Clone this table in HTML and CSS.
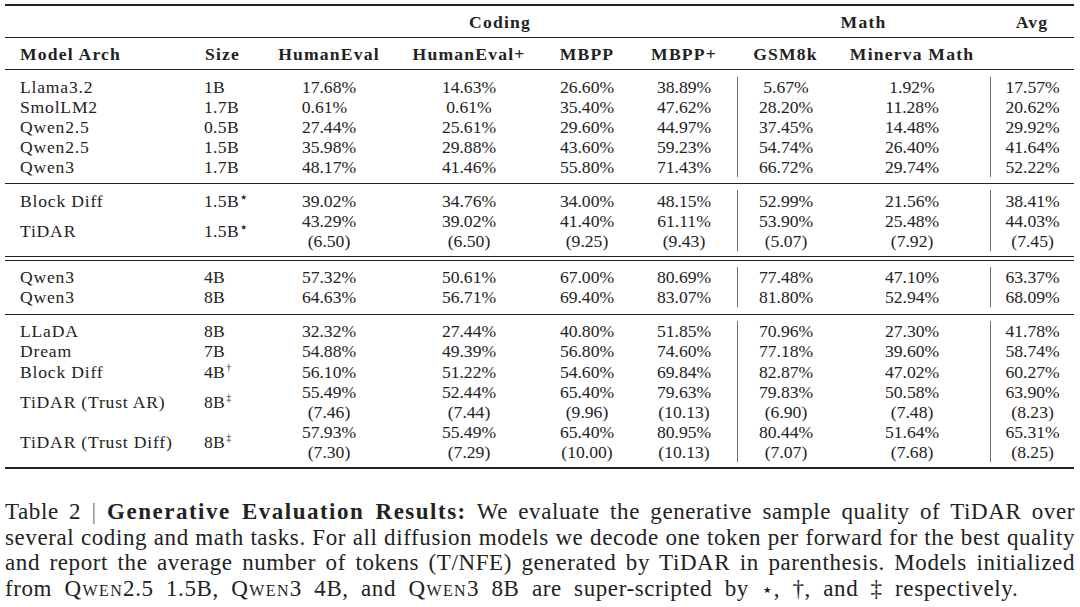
FILE: index.html
```html
<!DOCTYPE html>
<html lang="en">
<head>
<meta charset="utf-8">
<title>Table 2 | Generative Evaluation Results</title>
<link rel="stylesheet" href="styles.css">
</head>
<body>
<div class="page">
  <table class="results">
    <colgroup>
      <col class="c-model"><col class="c-size"><col class="c-he"><col class="c-hep"><col class="c-mbpp"><col class="c-mbppp"><col class="c-gsm"><col class="c-minerva"><col class="c-avg">
    </colgroup>
    <thead>
      <tr class="h1">
        <th></th><th></th>
        <th colspan="4">Coding</th>
        <th colspan="2">Math</th>
        <th>Avg</th>
      </tr>
      <tr class="h2">
        <th class="left">Model Arch</th>
        <th class="left">Size</th>
        <th>HumanEval</th>
        <th>HumanEval+</th>
        <th>MBPP</th>
        <th>MBPP+</th>
        <th>GSM8k</th>
        <th>Minerva Math</th>
        <th></th>
      </tr>
    </thead>
    <tbody>
      <tr class="gap g7"><td colspan="9"></td></tr>
      <tr><td class="name">Llama3.2</td><td class="size">1B</td><td>17.68%</td><td>14.63%</td><td>26.60%</td><td>38.89%</td><td class="vl">5.67%</td><td>1.92%</td><td class="vl">17.57%</td></tr>
      <tr><td class="name">SmolLM2</td><td class="size">1.7B</td><td><span class="nudge">0.61%</span></td><td>0.61%</td><td>35.40%</td><td>47.62%</td><td class="vl">28.20%</td><td>11.28%</td><td class="vl">20.62%</td></tr>
      <tr><td class="name">Qwen2.5</td><td class="size">0.5B</td><td>27.44%</td><td>25.61%</td><td>29.60%</td><td>44.97%</td><td class="vl">37.45%</td><td>14.48%</td><td class="vl">29.92%</td></tr>
      <tr><td class="name">Qwen2.5</td><td class="size">1.5B</td><td>35.98%</td><td>29.88%</td><td>43.60%</td><td>59.23%</td><td class="vl">54.74%</td><td>26.40%</td><td class="vl">41.64%</td></tr>
      <tr><td class="name">Qwen3</td><td class="size">1.7B</td><td>48.17%</td><td>41.46%</td><td>55.80%</td><td>71.43%</td><td class="vl">66.72%</td><td>29.74%</td><td class="vl">52.22%</td></tr>
      <tr class="gap g6"><td colspan="9"></td></tr>
      <tr class="rule"><td colspan="9"></td></tr>
      <tr class="gap g6"><td colspan="9"></td></tr>

      <tr class="tall"><td class="name">Block Diff</td><td class="size">1.5B<sup class="star">⋆</sup></td><td>39.02%</td><td>34.76%</td><td>34.00%</td><td>48.15%</td><td class="vl">52.99%</td><td>21.56%</td><td class="vl">38.41%</td></tr>
      <tr><td class="name" rowspan="2">TiDAR</td><td class="size" rowspan="2">1.5B<sup class="star">⋆</sup></td><td>43.29%</td><td>39.02%</td><td>41.40%</td><td>61.11%</td><td class="vl">53.90%</td><td>25.48%</td><td class="vl">44.03%</td></tr>
      <tr><td>(6.50)</td><td>(6.50)</td><td>(9.25)</td><td>(9.43)</td><td class="vl">(5.07)</td><td>(7.92)</td><td class="vl">(7.45)</td></tr>
      <tr class="gap g5"><td colspan="9"></td></tr>
      <tr class="rule"><td colspan="9"></td></tr>
      <tr class="gap g3"><td colspan="9"></td></tr>
      <tr class="rule"><td colspan="9"></td></tr>
      <tr class="gap g6"><td colspan="9"></td></tr>

      <tr><td class="name">Qwen3</td><td class="size">4B</td><td>57.32%</td><td>50.61%</td><td>67.00%</td><td>80.69%</td><td class="vl">77.48%</td><td>47.10%</td><td class="vl">63.37%</td></tr>
      <tr><td class="name">Qwen3</td><td class="size">8B</td><td>64.63%</td><td>56.71%</td><td>69.40%</td><td>83.07%</td><td class="vl">81.80%</td><td>52.94%</td><td class="vl">68.09%</td></tr>
      <tr class="gap g7"><td colspan="9"></td></tr>
      <tr class="rule"><td colspan="9"></td></tr>
      <tr class="gap g6"><td colspan="9"></td></tr>

      <tr><td class="name">LLaDA</td><td class="size">8B</td><td>32.32%</td><td>27.44%</td><td>40.80%</td><td>51.85%</td><td class="vl">70.96%</td><td>27.30%</td><td class="vl">41.78%</td></tr>
      <tr><td class="name">Dream</td><td class="size">7B</td><td>54.88%</td><td>49.39%</td><td>56.80%</td><td>74.60%</td><td class="vl">77.18%</td><td>39.60%</td><td class="vl">58.74%</td></tr>
      <tr class="tall"><td class="name">Block Diff</td><td class="size">4B<sup>†</sup></td><td>56.10%</td><td>51.22%</td><td>54.60%</td><td>69.84%</td><td class="vl">82.87%</td><td>47.02%</td><td class="vl">60.27%</td></tr>
      <tr><td class="name" rowspan="2">TiDAR (Trust AR)</td><td class="size" rowspan="2">8B<sup>‡</sup></td><td>55.49%</td><td>52.44%</td><td>65.40%</td><td>79.63%</td><td class="vl">79.83%</td><td>50.58%</td><td class="vl">63.90%</td></tr>
      <tr><td>(7.46)</td><td>(7.44)</td><td>(9.96)</td><td>(10.13)</td><td class="vl">(6.90)</td><td>(7.48)</td><td class="vl">(8.23)</td></tr>
      <tr><td class="name" rowspan="2">TiDAR (Trust Diff)</td><td class="size" rowspan="2">8B<sup>‡</sup></td><td>57.93%</td><td>55.49%</td><td>65.40%</td><td>80.95%</td><td class="vl">80.44%</td><td>51.64%</td><td class="vl">65.31%</td></tr>
      <tr><td>(7.30)</td><td>(7.29)</td><td>(10.00)</td><td>(10.13)</td><td class="vl">(7.07)</td><td>(7.68)</td><td class="vl">(8.25)</td></tr>
      <tr class="gap g5"><td colspan="9"></td></tr>
      <tr class="rule heavy"><td colspan="9"></td></tr>
    </tbody>
  </table>

  <p class="caption">
    <span class="line">Table 2 <span class="bar">|</span> <b>Generative Evaluation Results:</b> We evaluate the generative sample quality of TiDAR over</span>
    <span class="line">several coding and math tasks. For all diffusion models we decode one token per forward for the best quality</span>
    <span class="line">and report the average number of tokens (T/NFE) generated by TiDAR in parenthesis. Models initialized</span>
    <span class="line last">from <span class="sc">Qwen</span>2.5 1.5B, <span class="sc">Qwen</span>3 4B, and <span class="sc">Qwen</span>3 8B are super-scripted by <span class="sym">⋆</span>, †, and ‡ respectively.</span>
  </p>
</div>
</body>
</html>
```

FILE: styles.css
```css
html, body {
  margin: 0;
  padding: 0;
  background: #ffffff;
}

body {
  font-family: "Liberation Serif", "DejaVu Serif", serif;
  color: #222222;
}

.page {
  padding: 4px 5px 0 5px;
  width: 1070px;
}

.results {
  width: 1069px;
  table-layout: fixed;
  border-collapse: separate;
  border-spacing: 0;
  font-size: 17.6px;
}

.c-model { width: 185px; }
.c-size { width: 73px; }
.c-he { width: 132px; }
.c-hep { width: 148px; }
.c-mbpp { width: 88px; }
.c-mbppp { width: 106px; }
.c-gsm { width: 97px; }
.c-minerva { width: 156px; }
.c-avg { width: 84px; }

.results th,
.results td {
  padding: 0;
  text-align: center;
  white-space: nowrap;
}

.results th {
  font-weight: bold;
  letter-spacing: 1.2px;
}

.results .h1 th {
  border-top: 2px solid #222222;
  border-bottom: 1px solid #222222;
  height: 31px;
  line-height: 20px;
}

.results .h2 th {
  border-bottom: 1px solid #222222;
  height: 31px;
  line-height: 20px;
}

.results th.left {
  text-align: left;
  padding-left: 15px;
}

.results td {
  height: 20px;
  line-height: 20px;
}

.results td.name {
  text-align: left;
  padding-left: 15px;
  letter-spacing: 0.8px;
  vertical-align: middle;
}

.results td.size {
  text-align: left;
  padding-left: 14px;
  letter-spacing: 0.3px;
  vertical-align: middle;
}

.results .nudge {
  margin-right: 9px;
}

.results tr.tall td {
  height: 21px;
}

.results td.vl {
  border-left: 1px solid #6e6e6e;
}

.results sup {
  font-size: 10px;
  line-height: 0;
  vertical-align: baseline;
  position: relative;
  top: -7px;
  margin-left: 1px;
}

.results sup.star {
  font-family: "DejaVu Sans", sans-serif;
  font-size: 15px;
  top: -5px;
  margin-left: 0;
}

.results tr.gap td {
  padding: 0;
  line-height: 0;
  font-size: 0;
}

.results tr.g3 td { height: 3px; }
.results tr.g5 td { height: 5px; }
.results tr.g6 td { height: 6px; }
.results tr.g7 td { height: 7px; }

.results tr.rule td {
  height: 1px;
  padding: 0;
  line-height: 0;
  font-size: 0;
  background: #222222;
}

.results tr.rule.heavy td {
  height: 2px;
}

.caption {
  margin: 30px 0 0 0;
  width: 1070px;
  font-size: 23px;
  line-height: 25.5px;
  letter-spacing: 0.6px;
}

.caption .line {
  display: block;
  white-space: nowrap;
  text-align: justify;
  text-align-last: justify;
}

.caption .line.last {
  text-align: left;
  text-align-last: left;
  word-spacing: 6px;
}

.caption b {
  letter-spacing: 1.5px;
}

.caption .bar {
  color: #777777;
}

.caption .sc {
  font-variant: small-caps;
  letter-spacing: 1.4px;
}

.caption .sym {
  font-family: "DejaVu Sans", sans-serif;
  font-size: 19px;
}
```
